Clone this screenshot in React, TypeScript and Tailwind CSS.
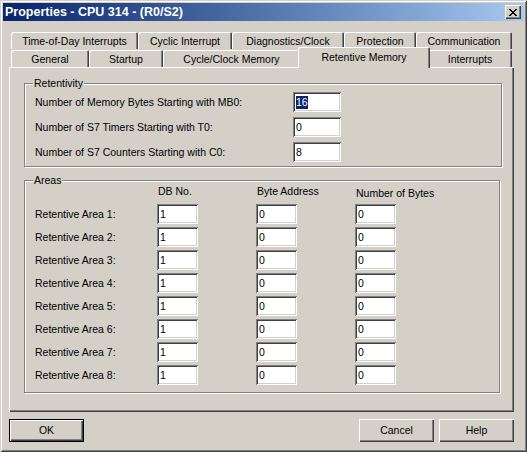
import React from "react";

const raised =
  "shadow-[inset_1px_1px_0_#ffffff,inset_-1px_-1px_0_#404040,inset_-2px_-2px_0_#808080]";
const sunken =
  "shadow-[inset_1px_1px_0_#808080,inset_-1px_-1px_0_#ffffff,inset_2px_2px_0_#404040,inset_-2px_-2px_0_#d4d0c8]";
const tabShadow =
  "shadow-[inset_1px_1px_0_#ffffff,inset_-1px_0_0_#404040,inset_-2px_0_0_#808080]";

function Field({ value, w, selected }: { value: string; w: string; selected?: boolean }) {
  return (
    <div className={`${w} h-[20px] bg-white ${sunken} flex items-center pl-[3px] text-black`}>
      {selected ? <span className="bg-[#0a246a] text-white leading-[13px]">{value}</span> : <span>{value}</span>}
    </div>
  );
}

function Tab({ label, w, selected }: { label: string; w: string; selected?: boolean }) {
  if (selected) {
    return (
      <div
        className={`${w} relative z-10 -mx-[2px] -mt-[2px] h-[21px] bg-[#d4d0c8] rounded-t-[2px] shadow-[inset_1px_1px_0_#ffffff,inset_-1px_0_0_#404040,inset_-2px_0_0_#808080] flex items-start justify-center pt-[4px] text-black`}
      >
        {label}
      </div>
    );
  }
  return (
    <div className={`${w} mt-[1px] h-[17px] bg-[#d4d0c8] rounded-t-[2px] ${tabShadow} flex items-center justify-center pt-[1px] text-black`}>
      {label}
    </div>
  );
}

function Group({ label, className, children }: { label: string; className: string; children: React.ReactNode }) {
  return (
    <div className={`relative border border-[#808080] shadow-[1px_1px_0_#ffffff,inset_1px_1px_0_#ffffff] ${className}`}>
      <span className="absolute -top-[8px] left-[8px] bg-[#d4d0c8] px-[1px] leading-[14px] text-black">{label}</span>
      {children}
    </div>
  );
}

function Button({ label, def }: { label: string; def?: boolean }) {
  if (def) {
    return (
      <div className="w-[75px] h-[23px] border border-black">
        <div className={`w-full h-full ${raised} flex items-center justify-center text-black`}>{label}</div>
      </div>
    );
  }
  return <div className={`w-[75px] h-[23px] ${raised} flex items-center justify-center text-black`}>{label}</div>;
}

export default function App() {
  const rows = [1, 2, 3, 4, 5, 6, 7, 8];
  return (
    <div
      className="w-[527px] h-[452px] overflow-hidden bg-[#d4d0c8] p-[3px] shadow-[inset_1px_1px_0_#d4d0c8,inset_-1px_-1px_0_#404040,inset_2px_2px_0_#ffffff,inset_-2px_-2px_0_#808080] text-[10.5px] leading-[13px]"
      style={{ fontFamily: '"Liberation Sans", Arial, sans-serif' }}
    >
      {/* Title bar */}
      <div className="h-[18px] bg-gradient-to-r from-[#0a246a] to-[#a6caf0] flex items-center justify-between pl-[2px] pr-[3px]">
        <span className="text-white font-bold text-[12.5px] leading-[14px]">Properties - CPU 314 - (R0/S2)</span>
        <div className={`w-[16px] h-[14px] bg-[#d4d0c8] ${raised} flex items-center justify-center`}>
          <svg width="8" height="7" viewBox="0 0 8 7" shapeRendering="crispEdges">
            <path d="M0 0h2v1h-2zM6 0h2v1h-2zM1 1h2v1h-2zM5 1h2v1h-2zM2 2h4v1h-4zM3 3h2v1h-2zM2 4h4v1h-4zM1 5h2v1h-2zM5 5h2v1h-2zM0 6h2v1h-2zM6 6h2v1h-2z" fill="#000" />
          </svg>
        </div>
      </div>

      <div className="ml-[6px] w-[505px]">
        {/* Tabs */}
        <div className="mt-[10px] pl-[2px] h-[36px] flex flex-col">
          <div className="flex h-[18px]">
            <Tab label="Time-of-Day Interrupts" w="w-[127px]" />
            <Tab label="Cyclic Interrupt" w="w-[94px]" />
            <Tab label="Diagnostics/Clock" w="w-[112px]" />
            <Tab label="Protection" w="w-[72px]" />
            <Tab label="Communication" w="w-[96px]" />
          </div>
          <div className="flex h-[18px]">
            <Tab label="General" w="w-[78px]" />
            <Tab label="Startup" w="w-[74px]" />
            <Tab label="Cycle/Clock Memory" w="w-[137px]" />
            <Tab label="Retentive Memory" w="w-[132px]" selected />
            <Tab label="Interrupts" w="w-[84px]" />
          </div>
        </div>

        {/* Panel */}
        <div className="h-[345px] shadow-[inset_1px_1px_0_#ffffff,inset_-1px_-1px_0_#404040,inset_-2px_-2px_0_#808080] pl-[15px] pt-[16px]">
          <Group label="Retentivity" className="w-[478px] h-[84px] pt-[8px] pl-[10px]">
            <div className="flex flex-col gap-[5px]">
              <div className="flex items-center h-[20px]">
                <span className="w-[258px] text-black">Number of Memory Bytes Starting with MB0:</span>
                <Field value="16" w="w-[48px]" selected />
              </div>
              <div className="flex items-center h-[20px]">
                <span className="w-[258px] text-black">Number of S7 Timers Starting with T0:</span>
                <Field value="0" w="w-[48px]" />
              </div>
              <div className="flex items-center h-[20px]">
                <span className="w-[258px] text-black">Number of S7 Counters Starting with C0:</span>
                <Field value="8" w="w-[48px]" />
              </div>
            </div>
          </Group>

          <Group label="Areas" className="mt-[13px] w-[476px] h-[213px] pt-[4px] pl-[10px]">
            <div className="flex h-[13px] text-black">
              <span className="w-[123px]" />
              <span className="w-[99px]">DB No.</span>
              <span className="w-[99px]">Byte Address</span>
              <span className="pt-[2px]">Number of Bytes</span>
            </div>
            <div className="mt-[6px] flex flex-col gap-[3px]">
              {rows.map((n) => (
                <div key={n} className="flex items-center h-[20px]">
                  <span className="w-[122px] text-black">Retentive Area {n}:</span>
                  <Field value="1" w="w-[41px]" />
                  <span className="w-[58px]" />
                  <Field value="0" w="w-[41px]" />
                  <span className="w-[58px]" />
                  <Field value="0" w="w-[41px]" />
                </div>
              ))}
            </div>
          </Group>
        </div>

        {/* Buttons */}
        <div className="mt-[7px] flex items-center">
          <Button label="OK" def />
          <div className="flex-1" />
          <div className="flex gap-[5px]">
            <Button label="Cancel" />
            <Button label="Help" />
          </div>
        </div>
      </div>
    </div>
  );
}
